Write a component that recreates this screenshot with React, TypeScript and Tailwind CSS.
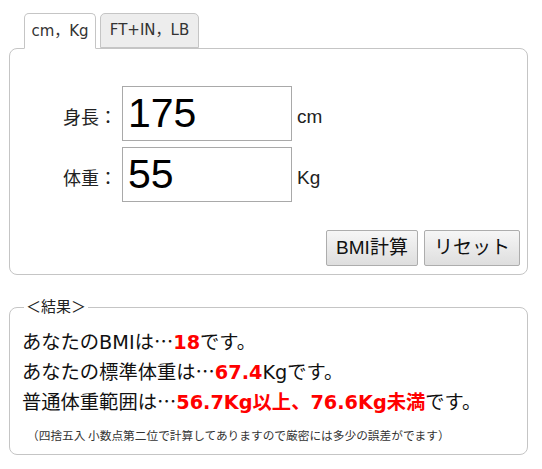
import React from 'react';

const jp = { fontFamily: '"DejaVu Sans", "Noto Sans CJK JP", sans-serif' };
const arial = { fontFamily: '"Liberation Sans", Arial, "Noto Sans CJK JP", sans-serif' };
const cjk = { fontFamily: '"Noto Sans CJK JP", sans-serif' };

const Dots = () => <span style={cjk}>…</span>;

export default function App() {
  return (
    <div className="w-[542px] h-[469px] bg-white text-[#222] pl-[9px] pt-[13px]" style={jp}>
      {/* tabs */}
      <div className="flex gap-[4px] pl-[15px] relative z-10">
        <div className="w-[72px] h-[36px] -mb-px border border-[#c5c5c5] border-b-white rounded-t-[5px] bg-white flex items-center justify-center text-[15px] text-[#333]">
          cm，Kg
        </div>
        <div className="w-[99px] h-[35px] border border-[#c5c5c5] rounded-t-[5px] bg-[#ededed] flex items-center justify-center text-[15px] text-[#333]">
          FT+IN，LB
        </div>
      </div>

      {/* input panel */}
      <div className="w-[519px] h-[227px] border border-[#c5c5c5] rounded-[8px] flex flex-col">
        <div className="pt-[37px] flex flex-col gap-[6px]">
          <div className="flex items-center">
            <div className="w-[112px] text-right text-[18px] pt-[8px] pr-[5px]">身長：</div>
            <div className="w-[170px] h-[55px] border border-[#a9a9a9] flex items-center pl-[5px] text-[41px] text-black" style={arial}>175</div>
            <div className="pl-[5px] pt-[8px] text-[19px]" style={arial}>cm</div>
          </div>
          <div className="flex items-center">
            <div className="w-[112px] text-right text-[18px] pt-[8px] pr-[5px]">体重：</div>
            <div className="w-[170px] h-[55px] border border-[#a9a9a9] flex items-center pl-[5px] text-[41px] text-black" style={arial}>55</div>
            <div className="pl-[5px] pt-[8px] text-[19px]" style={arial}>Kg</div>
          </div>
        </div>
        <div className="mt-auto flex justify-end gap-[6px] pr-[7px] pb-[8px]">
          <button className="w-[92px] h-[36px] border border-[#adadad] rounded-[2px] bg-gradient-to-b from-[#f6f6f6] to-[#dedede] text-[19px] text-[#111]" style={arial}>BMI計算</button>
          <button className="w-[96px] h-[36px] border border-[#adadad] rounded-[2px] bg-gradient-to-b from-[#f6f6f6] to-[#dedede] text-[19px] text-[#111]" style={arial}>リセット</button>
        </div>
      </div>

      {/* results */}
      <fieldset className="mt-[22px] w-[519px] h-[158px] border border-[#c5c5c5] rounded-[8px] px-[12px] pb-0">
        <legend className="ml-[2px] px-[2px] text-[15px] text-[#222] leading-[20px]">＜結果＞</legend>
        <div className="text-[19.3px] leading-[29px] text-[#111] mt-[10px]">
          <div>あなたのBMIは<Dots /><span className="text-[#ff0000] font-bold">18</span>です。</div>
          <div>あなたの標準体重は<Dots /><span className="text-[#ff0000] font-bold">67.4</span>Kgです。</div>
          <div>普通体重範囲は<Dots /><span className="text-[#ff0000] font-bold">56.7Kg以上、76.6Kg未満</span>です。</div>
        </div>
        <div className="mt-[9px] pl-[5px] text-[11.7px] text-[#333]" style={cjk}>（四捨五入 小数点第二位で計算してありますので厳密には多少の誤差がでます）</div>
      </fieldset>
    </div>
  );
}
